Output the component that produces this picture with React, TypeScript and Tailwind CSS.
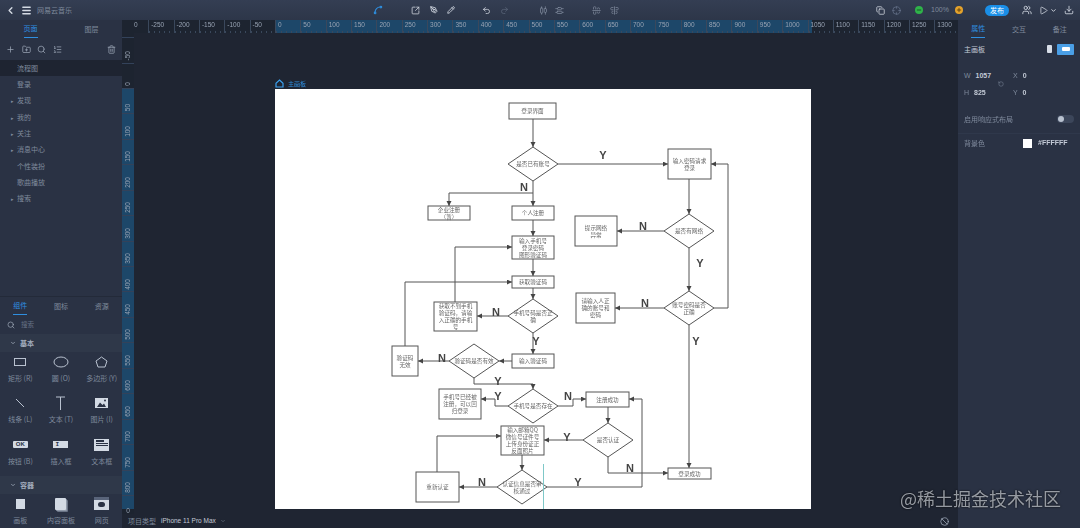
import { AlignCenterHorizontal, AlignCenterVertical, AlignHorizontalDistributeCenter, AlignVerticalDistributeCenter, Ban, ChevronDown, ChevronLeft, Copy, Crosshair, Download, FolderPlus, ListOrdered, Menu, Minus, PenTool, Pencil, Play, Plus, Redo2, RotateCcw, Search, Spline, SquareArrowOutUpRight, Trash2, Undo2, Users } from "lucide-react";

const pages = [
  { name: "流程图", active: true },
  { name: "登录" },
  { name: "发现", arrow: true },
  { name: "我的", arrow: true },
  { name: "关注", arrow: true },
  { name: "消息中心", arrow: true },
  { name: "个性装扮" },
  { name: "歌曲播放" },
  { name: "搜索", arrow: true },
];

const hTicks = Array.from({ length: 32 }, (_, i) => i - 5);
const vTicks = Array.from({ length: 18 }, (_, i) => i - 1);

function Tabs({ items, cols }: { items: string[]; cols: string }) {
  return (
    <div className={`grid h-[19px] ${cols}`}>
      {items.map((item, i) => (
        <div key={item} className="flex justify-center">
          <span
            className={`flex h-[18px] items-center text-[7px] ${
              i === 0 ? "border-b border-[#2f8fe0] text-[#2f8fe0]" : "text-[#7f8a9c]"
            }`}
          >
            {item}
          </span>
        </div>
      ))}
    </div>
  );
}

function SectionHeader({ title }: { title: string }) {
  return (
    <div className="flex h-[18px] items-center gap-1 bg-[#2f3849] pl-2.5 text-[7px] font-semibold text-[#a3adbd]">
      <ChevronDown size={6} strokeWidth={3} />
      {title}
    </div>
  );
}

function Widget({ label, children }: { label: string; children: React.ReactNode }) {
  return (
    <div className="flex h-[41.3px] flex-col items-center pt-[2px]">
      <div className="flex h-4 items-center justify-center text-[#b9c2d0]">{children}</div>
      <span className="mt-[3px] text-[7px] leading-[10px] whitespace-nowrap text-[#7f8a9c]">{label}</span>
    </div>
  );
}

function LeftPanel() {
  return (
    <aside className="flex w-[122px] shrink-0 flex-col overflow-hidden bg-[#2a3244]">
      <Tabs items={["页面", "图层"]} cols="grid-cols-2" />
      <div className="flex h-[20px] shrink-0 items-center gap-[6.5px] pl-[6px] text-[#9aa4b4]">
        <Plus size={9} />
        <FolderPlus size={9} />
        <Search size={9} />
        <ListOrdered size={9} />
        <Trash2 size={9} className="ml-auto mr-[6px]" />
      </div>
      <div className="mt-[1px] h-[236px] shrink-0">
        {pages.map((page) => (
          <div
            key={page.name}
            className={`flex h-[16.3px] items-center pl-[17px] text-[7px] text-[#7f8a9c] ${page.active ? "bg-[#1e2431]" : ""}`}
          >
            {page.arrow ? <span className="-ml-[6px] mr-[3px] text-[5px] leading-none">▸</span> : null}
            {page.name}
          </div>
        ))}
      </div>
      <div className="border-t border-[#232a39]">
        <Tabs items={["组件", "图标", "资源"]} cols="grid-cols-3" />
        <div className="flex h-[18px] items-center gap-1.5 pl-[7px] text-[6.5px] text-[#667184]">
          <Search size={8} className="text-[#a3adbd]" />
          搜索
        </div>
        <SectionHeader title="基本" />
        <div className="grid grid-cols-3">
          <Widget label="矩形 (R)">
            <svg width="14" height="10" viewBox="0 0 14 10"><rect x="1.5" y="1.5" width="11" height="7" fill="none" stroke="currentColor" /></svg>
          </Widget>
          <Widget label="圆 (O)">
            <svg width="16" height="12" viewBox="0 0 16 12"><ellipse cx="8" cy="6" rx="7" ry="5" fill="none" stroke="currentColor" /></svg>
          </Widget>
          <Widget label="多边形 (Y)">
            <svg width="13" height="12" viewBox="0 0 13 12"><path d="M6.5 1 12 5 10 11H3L1 5Z" fill="none" stroke="currentColor" /></svg>
          </Widget>
          <Widget label="线条 (L)">
            <svg width="10" height="10" viewBox="0 0 10 10"><path d="M1 1 9 9" stroke="currentColor" /></svg>
          </Widget>
          <Widget label="文本 (T)">
            <svg width="9" height="14" viewBox="0 0 9 14"><path d="M0 1H9M4.5 1V14" stroke="currentColor" fill="none" /></svg>
          </Widget>
          <Widget label="图片 (I)">
            <svg width="13" height="10" viewBox="0 0 13 10"><path d="M0 0H13V10H0Z" fill="#d3dae4" /><path d="M2 9 5 4.5 7.5 7 9 5.5 11 9Z" fill="#2a3244" /><circle cx="10" cy="2.5" r="1" fill="#2a3244" /></svg>
          </Widget>
          <Widget label="按钮 (B)">
            <div className="flex h-[7px] w-[15px] items-center justify-center rounded-[1px] bg-[#d3dae4] font-['Liberation_Sans',sans-serif] text-[6px] font-bold text-[#2a3244]">OK</div>
          </Widget>
          <Widget label="插入框">
            <div className="flex h-[7px] w-[15px] items-center bg-[#d3dae4] pl-0.5 font-['Liberation_Mono',monospace] text-[6px] font-bold text-[#2a3244]">I</div>
          </Widget>
          <Widget label="文本框">
            <div className="flex h-[12px] w-[15px] flex-col gap-[1px] bg-[#d3dae4] p-[1.5px]">
              <div className="h-[2px] w-2 bg-[#2a3244]" />
              <div className="h-px w-full bg-[#2a3244]" />
              <div className="h-px w-full bg-[#2a3244]" />
            </div>
          </Widget>
        </div>
        <SectionHeader title="容器" />
        <div className="grid h-[34px] grid-cols-3">
          <Widget label="画板">
            <div className="h-[10px] w-[9px] bg-[#d3dae4]" />
          </Widget>
          <Widget label="内容面板">
            <div className="h-[12px] w-[11px] rounded-[1px] bg-[#d3dae4] shadow-[1px_1px_0_#8f99a9,2px_2px_0_#6a7486]" />
          </Widget>
          <Widget label="网页">
            <div className="flex h-[13px] w-[15px] flex-col bg-[#d3dae4]">
              <div className="h-[3px] bg-[#59647a]" />
              <div className="mx-auto mt-[2px] h-[5px] w-[7px] rounded-full bg-[#2a3244]" />
            </div>
          </Widget>
        </div>
      </div>
    </aside>
  );
}

function HorizontalRuler() {
  return (
    <div className="flex h-[13px] shrink-0 overflow-hidden bg-[#1d2430]">
      <div className="h-full w-[26.16px] shrink-0 pl-[12px] pt-[1px] font-['Liberation_Sans',sans-serif] text-[6.5px] leading-[8px] text-[#98a3b3]">0</div>
      {hTicks.map((k) => (
        <div
          key={k}
          className={`flex h-full w-[25.36px] shrink-0 flex-col justify-between border-l border-[#3a485c] ${k >= 0 && k < 21 ? "bg-[#1d4769]" : ""} ${k === 21 ? "bg-[linear-gradient(90deg,#1d4769_3.4px,transparent_3.4px)]" : ""}`}
        >
          <span className="pl-[2px] pt-[1px] font-['Liberation_Sans',sans-serif] text-[6.5px] leading-[8px] text-[#98a3b3]">{k * 50}</span>
          <div className="h-[2px] bg-[repeating-linear-gradient(90deg,#3a485c_0_1px,transparent_1px_5px)]" />
        </div>
      ))}
    </div>
  );
}

function VerticalRuler() {
  return (
    <div className="w-3 shrink-0 overflow-hidden bg-[#1d2430]">
      <div className="h-[5.1px] border-b border-[#33425a]" />
      {vTicks.map((k) => (
        <div
          key={k}
          className={`flex h-[25.45px] items-end justify-center border-b border-[#33425a] ${k >= 1 && k <= 16 ? "bg-[#1d4769]" : ""}`}
        >
          <span className="mb-[2px] rotate-180 font-['Liberation_Sans',sans-serif] text-[6.5px] leading-[8px] text-[#98a3b3] [writing-mode:vertical-rl]">
            {k * 50}
          </span>
        </div>
      ))}
      <div className="flex h-[17px] flex-col items-center bg-[linear-gradient(#1d4769_13px,transparent_13px)]">
        <span className="mt-[13px] font-['Liberation_Sans',sans-serif] text-[6.5px] leading-[4px] text-[#98a3b3]">0</span>
      </div>
    </div>
  );
}

function Box({ x, y, w, h, lines }: { x: number; y: number; w: number; h: number; lines: string[] }) {
  const cy = y + h / 2;
  const start = cy - ((lines.length - 1) * 7) / 2;
  return (
    <g>
      <rect x={x} y={y} width={w} height={h} fill="#fff" stroke="#555" strokeWidth="1" />
      {lines.map((line, i) => (
        <text key={line} x={x + w / 2} y={start + i * 7 + 2} textAnchor="middle" fontSize="5.6" fill="#666">{line}</text>
      ))}
    </g>
  );
}

function Diamond({ cx, cy, lines }: { cx: number; cy: number; lines: string[] }) {
  const start = cy - ((lines.length - 1) * 7) / 2;
  return (
    <g>
      <path d={`M${cx} ${cy - 17} L${cx + 25} ${cy} L${cx} ${cy + 17} L${cx - 25} ${cy}Z`} fill="#fff" stroke="#555" strokeWidth="1" />
      {lines.map((line, i) => (
        <text key={line} x={cx} y={start + i * 7 + 2} textAnchor="middle" fontSize="5.6" fill="#666">{line}</text>
      ))}
    </g>
  );
}

function Flow({ d }: { d: string }) {
  return <path d={d} fill="none" stroke="#555" strokeWidth="1" markerEnd="url(#head)" />;
}

function Mark({ x, y, t }: { x: number; y: number; t: string }) {
  return (
    <text x={x} y={y} textAnchor="middle" fontSize="11" fontWeight="700" fontFamily="'Liberation Sans', sans-serif" fill="#444">{t}</text>
  );
}

function Flowchart() {
  return (
    <svg width="536" height="420" viewBox="275 89 536 420" className="block bg-white font-['Noto_Sans_CJK_SC',sans-serif]">
      <defs>
        <marker id="head" markerWidth="6" markerHeight="6" refX="5" refY="2.5" orient="auto" markerUnits="userSpaceOnUse">
          <path d="M0 0 L5 2.5 L0 5Z" fill="#444" />
        </marker>
      </defs>
      <Flow d="M533 119V147" />
      <Flow d="M558 164H668" />
      <Flow d="M533 181V206" />
      <Flow d="M533 193H449V206" />
      <Flow d="M533 220V236" />
      <Flow d="M533 259V276" />
      <Flow d="M533 288V299" />
      <Flow d="M508 316H477" />
      <Flow d="M455 302V247H512" />
      <Flow d="M405 346V282H512" />
      <Flow d="M533 333V354" />
      <Flow d="M512 361H499" />
      <Flow d="M449 361H418" />
      <Flow d="M474 378V384H533V389" />
      <Flow d="M508 406H495V399H481" />
      <Flow d="M558 406H573V399H586" />
      <Flow d="M608 407V423" />
      <Flow d="M583 440H544" />
      <Flow d="M522 455V470" />
      <Flow d="M497 487H459" />
      <Flow d="M437 472V436H501" />
      <Flow d="M547 487H642V399H629" />
      <Flow d="M608 457V473H668" />
      <Flow d="M689 179V214" />
      <Flow d="M664 231H617" />
      <Flow d="M689 248V291" />
      <Flow d="M714 308H728V164H711" />
      <Flow d="M664 308H615" />
      <Flow d="M689 325V468" />

      <Box x={509} y={103} w={47} h={16} lines={["登录界面"]} />
      <Diamond cx={533} cy={164} lines={["是否已有账号"]} />
      <Box x={668} y={149} w={43} h={30} lines={["输入密码请求", "登录"]} />
      <Box x={428} y={206} w={42} h={14} lines={["企业注册", "（暂）"]} />
      <Box x={512} y={206} w={42} h={14} lines={["个人注册"]} />
      <Box x={512} y={236} w={42} h={23} lines={["输入手机号", "登录密码", "图形验证码"]} />
      <Box x={512} y={276} w={42} h={12} lines={["获取验证码"]} />
      <Diamond cx={533} cy={316} lines={["手机号码是否正", "确"]} />
      <Box x={434} y={302} w={43} h={29} lines={["获取不到手机", "验证码，请输", "入正确的手机", "号"]} />
      <Box x={392} y={346} w={26} h={30} lines={["验证码", "无效"]} />
      <Diamond cx={474} cy={361} lines={["验证码是否有效"]} />
      <Box x={512} y={354} w={42} h={14} lines={["输入验证码"]} />
      <Diamond cx={533} cy={406} lines={["手机号是否存在"]} />
      <Box x={439} y={389} w={42} h={30} lines={["手机号已经被", "注册，可以回", "归登录"]} />
      <Box x={586} y={392} w={43} h={15} lines={["注册成功"]} />
      <Diamond cx={608} cy={440} lines={["是否认证"]} />
      <Box x={501} y={426} w={43} h={29} lines={["输入邮箱QQ", "微信号证件号", "上传身份证正", "反面照片"]} />
      <Diamond cx={522} cy={487} lines={["认证信息是否审", "核通过"]} />
      <Box x={416} y={472} w={43} h={30} lines={["重新认证"]} />
      <Box x={668} y={468} w={43} h={11} lines={["登录成功"]} />
      <Diamond cx={689} cy={231} lines={["是否有网络"]} />
      <Box x={575} y={216} w={42} h={30} lines={["提示网络", "异常"]} />
      <Diamond cx={689} cy={308} lines={["账号密码是否", "正确"]} />
      <Box x={576} y={293} w={39} h={30} lines={["请输入人正", "确的账号和", "密码"]} />

      <Mark x={603} y={159} t="Y" />
      <Mark x={524} y={191} t="N" />
      <Mark x={643} y={230} t="N" />
      <Mark x={700} y={267} t="Y" />
      <Mark x={645} y={307} t="N" />
      <Mark x={696} y={345} t="Y" />
      <Mark x={496} y={316} t="N" />
      <Mark x={536} y={345} t="Y" />
      <Mark x={442} y={362} t="N" />
      <Mark x={498} y={385} t="Y" />
      <Mark x={498} y={400} t="Y" />
      <Mark x={568} y={400} t="N" />
      <Mark x={567} y={441} t="Y" />
      <Mark x={630} y={472} t="N" />
      <Mark x={578} y={486} t="Y" />
      <Mark x={482} y={486} t="N" />
      <path d="M543.5 464V509" stroke="#7fc8c8" strokeWidth="1" />
    </svg>
  );
}

function Canvas() {
  return (
    <div className="flex min-w-0 flex-1 flex-col">
      <HorizontalRuler />
      <div className="flex min-h-0 flex-1">
        <VerticalRuler />
        <div className="min-w-0 flex-1 overflow-hidden bg-[#1f2532] pl-[141px] pt-[44px]">
          <div className="flex h-3 items-center gap-1 text-[6px] text-[#2f8fe0]">
            <svg width="9" height="9" viewBox="0 0 9 9"><path d="M4.5 1 8 4.2V8H1V4.2Z" fill="none" stroke="#3aa0ee" strokeWidth="1.2" /></svg>
            主画板
          </div>
          <Flowchart />
        </div>
      </div>
      <div className="flex h-[14px] shrink-0 items-center bg-[#1f2532] pl-[6px] pr-[9px] text-[7px] text-[#7f8a9c]">
        项目类型
        <span className="ml-[5px] font-['Liberation_Sans',sans-serif] text-[6.5px] text-[#c3cad6]">iPhone 11 Pro Max</span>
        <ChevronDown size={6} className="ml-[4px]" />
        <Ban size={9} className="ml-auto text-[#a3adbd]" />
      </div>
    </div>
  );
}

function RightPanel() {
  return (
    <aside className="flex w-[122px] shrink-0 flex-col bg-[#2a3244] text-[#7f8a9c]">
      <Tabs items={["属性", "交互", "备注"]} cols="grid-cols-3" />
      <div className="flex h-[20px] items-center px-[6px] text-[7px] text-[#c3cad6]">
        主画板
        <div className="ml-auto mr-[5px] h-[8px] w-[5px] rounded-[1px] bg-[#d8dee8]" />
        <div className="flex h-[11px] w-[17px] items-center justify-center rounded-[1px] bg-[#4a9fe6]">
          <div className="h-[4px] w-[8px] rounded-[1px] bg-white" />
        </div>
      </div>
      <div className="mt-[8px] grid grid-cols-[33px_16px_20px] pl-[6px] font-['Liberation_Sans',sans-serif] text-[7px] leading-[17px]">
        <span>W <b className="ml-[3px] font-semibold text-[#c3cad6]">1057</b></span>
        <RotateCcw size={6} className="row-span-2 ml-[1px] self-center" />
        <span>X <b className="ml-[3px] font-semibold text-[#c3cad6]">0</b></span>
        <span>H <b className="ml-[3px] font-semibold text-[#c3cad6]">825</b></span>
        <span>Y <b className="ml-[3px] font-semibold text-[#c3cad6]">0</b></span>
      </div>
      <div className="mt-[10px] flex h-[16px] items-center px-[6px] text-[7px]">
        启用响应式布局
        <div className="ml-auto flex h-[8px] w-[17px] items-center rounded-full bg-[#3c465a] pl-[1px]">
          <div className="h-[6px] w-[6px] rounded-full bg-[#b9c2d0]" />
        </div>
      </div>
      <div className="mt-[6px] flex h-[20px] items-center border-t border-[#2f384b] pl-[6px] text-[7px]">
        背景色
        <div className="ml-[38px] h-[9px] w-[9px] bg-white" />
        <span className="ml-[6px] font-['Liberation_Sans',sans-serif] text-[7px] font-semibold text-[#c3cad6]">#FFFFFF</span>
      </div>
    </aside>
  );
}

function TopBar() {
  return (
    <header className="flex h-5 shrink-0 items-center bg-gradient-to-b from-[#343e53] to-[#2d3649] pl-[5px] text-[#d5dbe4]">
      <ChevronLeft size={11} strokeWidth={3} />
      <Menu size={11} strokeWidth={3} className="ml-[5px]" />
      <span className="ml-[5px] text-[7px] text-[#7f8a9c]">网易云音乐</span>
      <Spline size={10} strokeWidth={2.5} className="ml-[301px] text-[#2f8fe0]" />
      <SquareArrowOutUpRight size={9} strokeWidth={2} className="ml-[28px]" />
      <PenTool size={8} strokeWidth={2.5} className="ml-[10px]" />
      <Pencil size={8} strokeWidth={2.5} className="ml-[9px]" />
      <Undo2 size={9} strokeWidth={2} className="ml-[27px]" />
      <Redo2 size={9} strokeWidth={2} className="ml-[9px] text-[#5b6679]" />
      <AlignHorizontalDistributeCenter size={9} className="ml-[30px] text-[#7f8a9c]" />
      <AlignVerticalDistributeCenter size={9} className="ml-[7px] text-[#7f8a9c]" />
      <AlignCenterHorizontal size={9} className="ml-[28px] text-[#7f8a9c]" />
      <AlignCenterVertical size={9} className="ml-[9px] text-[#7f8a9c]" />
      <Copy size={9} strokeWidth={2} className="ml-[257px]" />
      <Crosshair size={9} className="ml-[7px] text-[#66718a]" />
      <div className="ml-[14px] flex h-[8px] w-[8px] items-center justify-center rounded-full bg-[#2fb34a] text-[#143b1d]">
        <Minus size={6} strokeWidth={3} />
      </div>
      <span className="ml-[8px] font-['Liberation_Sans',sans-serif] text-[7px] text-[#7f8a9c]">100%</span>
      <div className="ml-[6px] flex h-[8px] w-[8px] items-center justify-center rounded-full bg-[#e5a32c] text-[#4c3408]">
        <Plus size={6} strokeWidth={3} />
      </div>
      <div className="ml-[22px] flex h-[11px] w-[24px] items-center justify-center rounded-full bg-[#1a8fe8] text-[7px] text-white">发布</div>
      <Users size={10} className="ml-[13px]" />
      <Play size={9} strokeWidth={2} className="ml-[7px]" />
      <ChevronDown size={7} strokeWidth={3} className="ml-[2px]" />
      <Download size={10} strokeWidth={2} className="ml-[7px]" />
    </header>
  );
}

export default function App() {
  return (
    <div className="relative h-[528px] w-[1080px] overflow-hidden bg-[#1f2532] font-['Noto_Sans_CJK_SC',sans-serif]">
      <div className="flex h-full flex-col blur-[0.3px]">
        <TopBar />
        <div className="flex min-h-0 flex-1">
          <LeftPanel />
          <Canvas />
          <RightPanel />
        </div>
      </div>
      <div className="absolute top-[487px] left-[900px] text-[18px] leading-[22px] whitespace-nowrap text-[#c3c8d0]/75 [text-shadow:0_0_2px_#000]">
        @稀土掘金技术社区
      </div>
    </div>
  );
}
